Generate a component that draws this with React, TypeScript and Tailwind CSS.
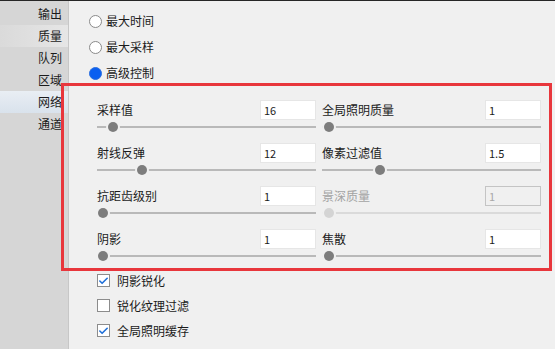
import { Check } from 'lucide-react'

const font = { fontFamily: '"Noto Sans CJK SC", "Noto Sans", sans-serif' }

const navItems = [
  { label: '输出' },
  { label: '质量', soft: true },
  { label: '队列' },
  { label: '区域' },
  { label: '网络', active: true },
  { label: '通道' },
]

const rows = [
  { l: '采样值', lv: '16', lp: 16, r: '全局照明质量', rv: '1', rp: 7 },
  { l: '射线反弹', lv: '12', lp: 45, r: '像素过滤值', rv: '1.5', rp: 58 },
  { l: '抗距齿级别', lv: '1', lp: 6, r: '景深质量', rv: '1', rp: 7, rd: true },
  { l: '阴影', lv: '1', lp: 6, r: '焦散', rv: '1', rp: 7 },
]

const Slider = ({ pos, disabled = false }: { pos: number; disabled?: boolean }) => (
  <div className="relative h-[12px] w-full">
    <div
      className={`absolute left-0 right-0 top-[5px] h-[2px] ${disabled ? 'bg-[#dadada]' : 'bg-[#b9b9b9]'}`}
    />
    <div
      className={`absolute top-[1px] h-[10px] w-[10px] -ml-[5px] rounded-full ring-2 ring-[#f0f0f0] ${
        disabled ? 'bg-[#d4d4d4]' : 'bg-[#7d7d7d]'
      }`}
      style={{ left: pos }}
    />
  </div>
)

const Field = ({
  label,
  value,
  pos,
  disabled = false,
}: {
  label: string
  value: string
  pos: number
  disabled?: boolean
}) => (
  <div className="flex flex-col gap-[1px]">
    <div className="flex h-[20px] items-center justify-between">
      <span className={`text-[12px] ${disabled ? 'text-[#a3a3a3]' : 'text-[#1b1b1b]'}`}>{label}</span>
      <div
        className={`flex h-[20px] w-[56px] items-center px-[3px] text-[11px] ${
          disabled
            ? 'border border-[#c4c4c4] bg-[#f0f0f0] text-[#a8a8a8]'
            : 'border border-[#e6e6e6] bg-white text-[#1b1b1b]'
        }`}
      >
        {value}
      </div>
    </div>
    <Slider pos={pos} disabled={disabled} />
  </div>
)

const Radio = ({ label, checked = false }: { label: string; checked?: boolean }) => (
  <div className="flex h-[26px] items-center gap-[4px]">
    {checked ? (
      <div className="h-[13px] w-[13px] rounded-full border border-[#2a6fe0] bg-[#0a5ff0]" />
    ) : (
      <div className="h-[13px] w-[13px] rounded-full border border-[#8a8a8a] bg-white" />
    )}
    <span className="text-[12px] text-[#1b1b1b]">{label}</span>
  </div>
)

const CheckRow = ({ label, checked = false }: { label: string; checked?: boolean }) => (
  <div className="flex h-[25px] items-center gap-[7px]">
    <div className="flex h-[13px] w-[13px] items-center justify-center border border-[#8c8c8c] bg-white">
      {checked && <Check className="h-[12px] w-[12px] text-[#1f6fd8]" strokeWidth={3.5} />}
    </div>
    <span className="text-[12px] text-[#1b1b1b]">{label}</span>
  </div>
)

export default function App() {
  return (
    <div className="relative flex h-[349px] w-[555px] flex-col overflow-hidden bg-[#f0f0f0]" style={font}>
      <div className="h-[1px] w-full bg-[#262626]" />
      <div className="flex flex-1">
        {/* Sidebar */}
        <div className="w-[69px] border-r border-[#c7c7c7] bg-[#d6d6d6] pt-[2px]">
          {navItems.map(item => (
            <div
              key={item.label}
              className={`flex h-[22px] items-center justify-end pr-[6px] text-[12px] text-[#1b1b1b] ${
                item.active
                  ? 'bg-gradient-to-b from-[#e9eef4] to-[#d9e2ec]'
                  : item.soft
                    ? 'bg-gradient-to-r from-[#dadada] to-[#e6e6e6]'
                    : ''
              }`}
            >
              {item.label}
            </div>
          ))}
        </div>

        {/* Main */}
        <div className="flex flex-1 flex-col pt-[7px]">
          <div className="pl-[20px]">
            <Radio label="最大时间" />
            <Radio label="最大采样" />
            <Radio label="高级控制" checked />
          </div>

          <div className="mt-[14px] grid grid-cols-[219px_219px] gap-x-[6px] gap-y-[10px] pl-[28px]">
            {rows.map(r => (
              <div key={r.l} className="contents">
                <Field label={r.l} value={r.lv} pos={r.lp} />
                <Field label={r.r} value={r.rv} pos={r.rp} disabled={r.rd} />
              </div>
            ))}
          </div>

          <div className="mt-[6px] pl-[28px]">
            <CheckRow label="阴影锐化" checked />
            <CheckRow label="锐化纹理过滤" />
            <CheckRow label="全局照明缓存" checked />
          </div>
        </div>
      </div>

      {/* annotation frame */}
      <div className="pointer-events-none absolute left-[61px] top-[83px] h-[188px] w-[491px] border-[3px] border-[#e8363c]" />
    </div>
  )
}
